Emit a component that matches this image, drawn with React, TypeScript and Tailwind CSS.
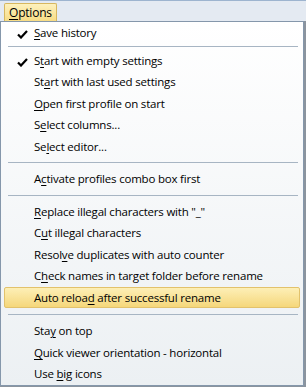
import React from "react";

type Item =
  | { kind: "sep"; h: string }
  | { kind: "item"; label: string; key: number; checked?: boolean; active?: boolean };

const items: Item[] = [
  { kind: "item", label: "Save history", key: 0, checked: true },
  { kind: "sep", h: "h-[6px]" },
  { kind: "item", label: "Start with empty settings", key: 1, checked: true },
  { kind: "item", label: "Start with last used settings", key: 2 },
  { kind: "item", label: "Open first profile on start", key: 0 },
  { kind: "item", label: "Select columns...", key: 1 },
  { kind: "item", label: "Select editor...", key: 2 },
  { kind: "sep", h: "h-[11px]" },
  { kind: "item", label: "Activate profiles combo box first", key: 1 },
  { kind: "sep", h: "h-[11px]" },
  { kind: "item", label: 'Replace illegal characters with "_"', key: 0 },
  { kind: "item", label: "Cut illegal characters", key: 1 },
  { kind: "item", label: "Resolve duplicates with auto counter", key: 5 },
  { kind: "item", label: "Check names in target folder before rename", key: 1 },
  { kind: "item", label: "Auto reload after successful rename", key: 10, active: true },
  { kind: "sep", h: "h-[12px]" },
  { kind: "item", label: "Stay on top", key: 3 },
  { kind: "item", label: "Quick viewer orientation - horizontal", key: 0 },
  { kind: "item", label: "Use big icons", key: 4 },
];

const Check = () => (
  <svg width="11" height="9" viewBox="0 0 11 9" className="absolute left-[12px] top-[7px]">
    <path d="M1 4.5 L4 7.5 L10 1" fill="none" stroke="#000" strokeWidth="2.2" />
  </svg>
);

const Label = ({ text, k }: { text: string; k: number }) => (
  <span>
    {text.slice(0, k)}
    <span className="underline underline-offset-2">{text[k]}</span>
    {text.slice(k + 1)}
  </span>
);

export default function App() {
  return (
    <div
      className="w-[306px] h-[387px] bg-[#8b949e] overflow-hidden text-[11.5px] tracking-[-0.2px] text-black"
      style={{ fontFamily: '"Open Sans", "Noto Sans", sans-serif' }}
    >
      <div className="h-[21px] bg-[#e4eaf2] border-t border-[#9db4cf] flex items-start pl-[4px] pt-[2px]">
        <div className="h-[18px] px-[4px] flex items-center text-[12px] rounded-t-[2px] border border-b-0 border-[#d7b75f] bg-gradient-to-b from-[#fdf1bd] to-[#f7dc85]">
          <Label text="Options" k={0} />
        </div>
      </div>
      <div className="w-[304px] h-[365px] border border-[#8597ab] bg-gradient-to-b from-white to-[#ecf0f3] px-[3px]">
        {items.map((it, i) =>
          it.kind === "sep" ? (
            <div key={i} className={`${it.h} flex items-center pl-[4px] pr-[2px]`}>
              <div className="h-px w-full bg-[#a7b5c3]" />
            </div>
          ) : (
            <div
              key={i}
              className={`relative h-[21.5px] flex items-center pl-[29px] rounded-[2px] ${
                it.active
                  ? "border border-[#e2c26c] bg-gradient-to-b from-[#fdefb6] to-[#f5d77a]"
                  : "border border-transparent"
              }`}
            >
              {it.checked && <Check />}
              <Label text={it.label} k={it.key} />
            </div>
          )
        )}
      </div>
    </div>
  );
}
